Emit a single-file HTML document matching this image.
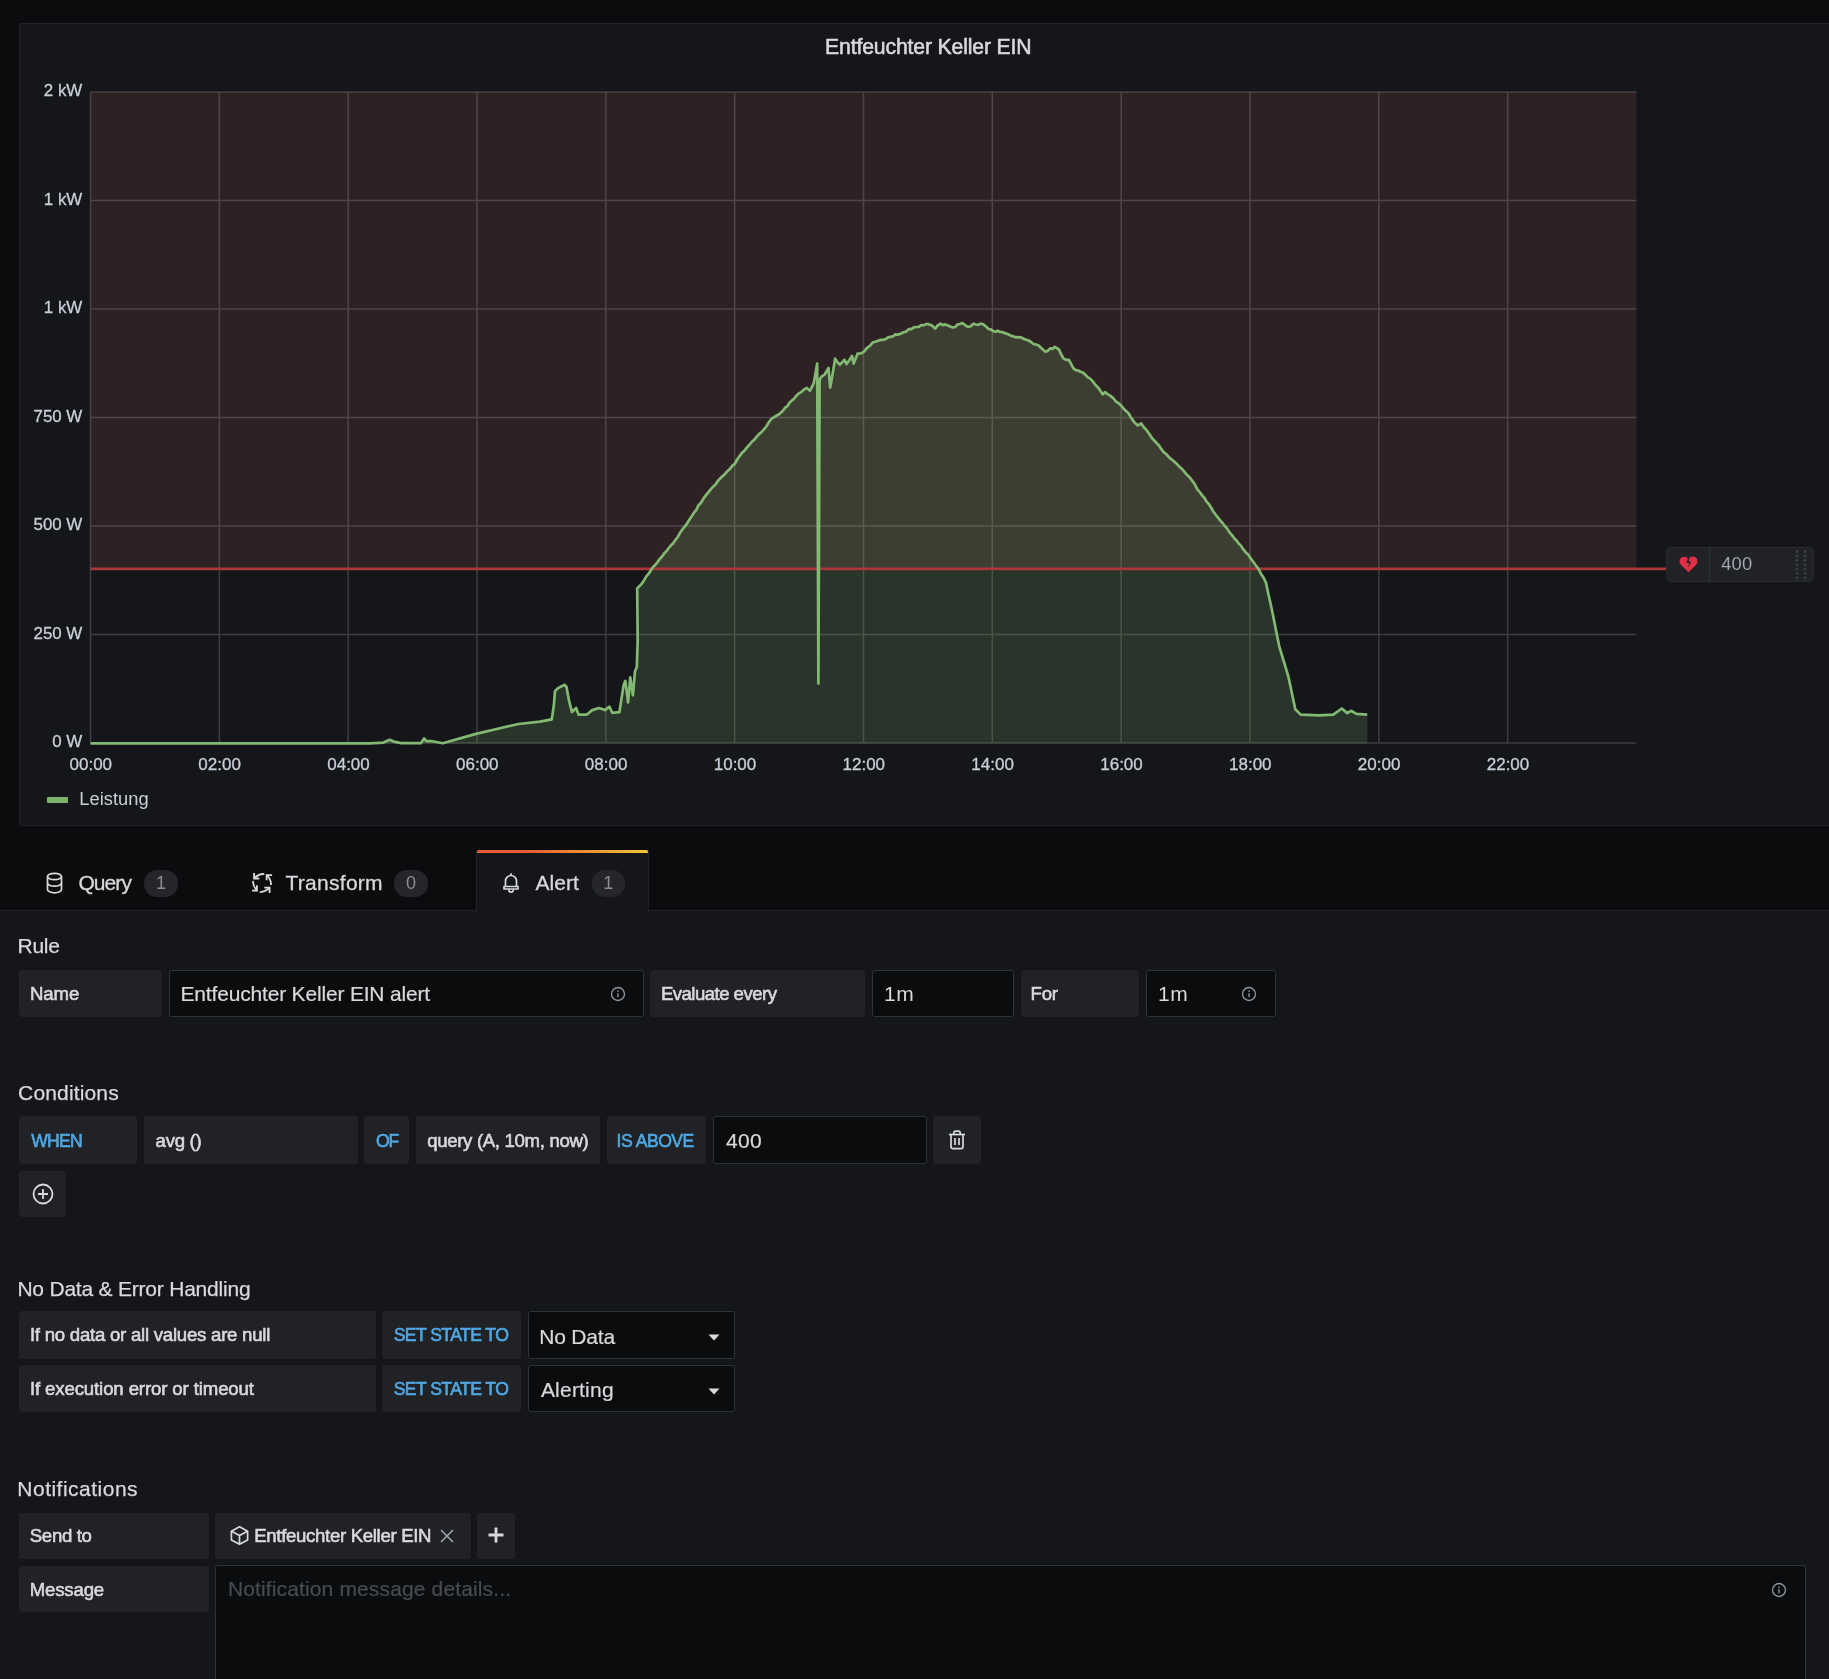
<!DOCTYPE html>
<html><head><meta charset="utf-8"><style>
html,body{margin:0;padding:0;width:1829px;height:1679px;overflow:hidden;background:#0b0c0e;font-family:"Liberation Sans", sans-serif;}
.a{position:absolute;box-sizing:border-box;}
.t{position:absolute;white-space:nowrap;line-height:1;font-family:"Liberation Sans", sans-serif;}
</style></head><body>
<div id="root" style="position:absolute;left:0;top:0;width:1829px;height:1679px;will-change:transform"><div class="a" style="left:19.0px;top:23.0px;width:1881.0px;height:803.0px;background:#141619;box-shadow:inset 0 0 0 1px #202226;border-radius:3px;"></div>
<svg class="a" style="left:0;top:0" width="1829" height="830" viewBox="0 0 1829 830"><rect x="90.5" y="92.0" width="1546.0" height="476.9" fill="rgba(234,112,112,0.12)"/><path d="M90.50 92.0V743.0 M219.33 92.0V743.0 M348.17 92.0V743.0 M477.00 92.0V743.0 M605.83 92.0V743.0 M734.67 92.0V743.0 M863.50 92.0V743.0 M992.33 92.0V743.0 M1121.17 92.0V743.0 M1250.00 92.0V743.0 M1378.83 92.0V743.0 M1507.67 92.0V743.0 M90.5 743.00H1636.5 M90.5 634.50H1636.5 M90.5 526.00H1636.5 M90.5 417.50H1636.5 M90.5 309.00H1636.5 M90.5 200.50H1636.5 M90.5 92.00H1636.5" stroke="rgba(200,200,200,0.22)" stroke-width="1.5" fill="none"/><path d="M90.5 743.3 L370.0 743.3 L383.5 742.6 L389.7 739.8 L394.9 741.9 L401.2 743.1 L420.9 743.2 L424.0 738.5 L426.6 741.2 L432.3 741.2 L442.7 743.3 L476.0 733.9 L499.9 728.2 L518.6 724.0 L540.0 721.6 L551.8 719.3 L553.9 705.0 L555.0 691.1 L558.0 688.1 L564.7 684.8 L566.5 686.9 L568.9 700.1 L571.9 711.9 L576.1 708.0 L578.5 714.6 L586.9 714.6 L591.7 710.4 L598.9 708.0 L604.9 710.1 L609.5 706.7 L612.2 712.8 L619.4 712.2 L623.6 685.1 L625.4 680.9 L628.1 702.5 L630.2 677.3 L632.9 695.3 L635.0 671.3 L636.8 667.1 L637.7 640.0 L637.2 588.4 L641.8 583.8 L644.1 580.1 L646.4 576.4 L648.7 573.7 L651.0 570.0 L653.2 566.7 L655.4 564.7 L657.7 561.8 L659.9 558.7 L662.1 556.6 L664.3 553.3 L666.5 551.1 L668.8 548.0 L671.0 545.3 L673.2 543.2 L675.5 539.8 L677.7 537.1 L680.0 532.8 L682.2 529.7 L684.5 526.9 L686.7 524.1 L689.0 520.2 L691.4 516.7 L693.8 512.9 L696.2 510.1 L698.6 505.2 L701.0 502.7 L703.4 498.6 L705.8 495.4 L708.3 492.3 L710.7 489.4 L713.1 486.7 L715.5 484.5 L718.0 480.8 L720.4 478.3 L722.8 476.0 L725.2 473.7 L727.6 470.9 L730.0 468.8 L732.4 465.7 L734.8 463.9 L737.5 459.0 L740.1 455.4 L742.4 452.4 L744.7 450.4 L747.0 447.4 L749.3 444.9 L751.7 442.0 L754.2 439.8 L756.6 436.9 L759.0 434.1 L761.4 432.2 L763.9 429.4 L766.3 426.5 L768.9 422.2 L771.5 418.7 L773.8 417.3 L776.1 415.8 L778.4 414.8 L780.7 412.8 L782.9 410.7 L785.2 407.6 L787.4 406.1 L789.7 402.5 L791.9 400.5 L794.2 398.5 L796.4 395.7 L799.0 393.3 L801.6 391.8 L804.3 389.2 L806.9 387.9 L809.9 390.9 L813.7 383.3 L817.2 363.6 L818.4 683.6 L819.6 380.0 L821.4 376.7 L824.7 374.5 L828.5 368.0 L830.2 387.6 L832.7 373.5 L835.1 358.7 L837.5 362.3 L840.0 364.7 L844.4 359.8 L846.6 364.1 L849.3 360.2 L852.0 355.9 L853.7 363.6 L857.5 353.7 L860.8 353.5 L864.0 351.6 L866.9 348.1 L869.9 345.8 L872.8 342.3 L875.3 341.7 L877.8 340.9 L880.3 339.8 L882.8 339.9 L885.3 339.3 L887.8 337.5 L890.3 336.8 L892.9 336.4 L895.4 334.4 L898.0 334.6 L900.7 333.7 L903.5 332.2 L906.2 331.6 L908.9 329.1 L911.4 329.2 L913.8 327.4 L916.3 327.0 L918.8 327.0 L921.2 325.0 L923.7 325.3 L926.1 324.1 L928.6 324.2 L931.9 325.6 L935.1 328.6 L937.9 325.2 L940.6 323.7 L943.0 325.1 L945.4 324.4 L947.8 325.4 L950.2 326.5 L952.6 327.5 L955.1 327.2 L957.5 324.4 L960.0 324.1 L962.5 323.1 L965.2 325.2 L967.9 327.0 L970.6 326.2 L973.4 323.7 L975.9 324.5 L978.3 324.8 L980.8 323.6 L983.2 324.2 L986.0 326.5 L988.7 329.1 L991.0 329.4 L993.2 331.1 L995.5 331.8 L997.7 330.7 L1000.0 332.0 L1002.6 332.2 L1005.2 333.2 L1007.9 334.1 L1010.5 335.5 L1013.1 336.4 L1015.7 337.3 L1018.3 337.2 L1021.0 337.3 L1023.6 338.9 L1026.2 339.7 L1028.6 340.5 L1031.0 342.0 L1033.5 344.0 L1035.9 344.5 L1038.3 345.2 L1040.7 347.4 L1043.0 349.8 L1045.4 351.7 L1047.7 350.9 L1050.1 348.3 L1052.4 348.9 L1054.7 346.8 L1059.0 349.5 L1061.2 354.5 L1063.4 358.3 L1066.2 359.9 L1068.9 359.9 L1073.3 368.1 L1075.7 370.1 L1078.1 370.5 L1080.5 371.8 L1082.9 372.5 L1085.3 374.7 L1087.8 377.4 L1090.2 378.6 L1092.6 381.1 L1095.1 384.5 L1097.7 387.2 L1100.2 390.4 L1102.8 394.4 L1105.0 392.2 L1107.7 394.2 L1110.5 395.9 L1113.2 398.1 L1115.9 401.5 L1118.4 403.1 L1120.8 405.3 L1123.3 408.2 L1125.8 410.8 L1128.5 413.3 L1131.2 417.9 L1134.5 422.5 L1137.8 425.5 L1141.1 423.3 L1143.8 427.3 L1146.5 429.9 L1149.3 433.9 L1152.0 438.1 L1154.3 440.5 L1156.7 443.2 L1159.0 445.5 L1161.4 449.2 L1163.7 452.1 L1166.1 454.0 L1168.4 456.7 L1171.0 459.0 L1173.5 460.9 L1176.1 463.2 L1178.6 465.9 L1181.2 468.2 L1183.7 470.9 L1186.5 474.4 L1189.3 477.0 L1192.0 480.4 L1194.7 484.1 L1197.4 489.3 L1200.1 492.5 L1202.3 495.6 L1204.6 498.2 L1206.8 501.9 L1209.0 504.2 L1211.3 508.0 L1213.5 511.8 L1215.7 514.7 L1218.0 517.6 L1220.2 520.4 L1222.5 523.0 L1224.8 526.0 L1227.2 528.6 L1229.5 532.4 L1231.8 534.9 L1234.2 538.2 L1236.5 540.5 L1238.8 543.6 L1241.1 545.9 L1243.4 549.4 L1245.8 552.4 L1248.1 554.4 L1250.6 558.4 L1253.2 561.8 L1255.7 565.3 L1258.2 568.4 L1260.8 573.4 L1263.3 577.3 L1265.9 582.3 L1268.2 593.2 L1270.6 603.8 L1272.9 614.8 L1279.1 645.8 L1288.4 676.7 L1295.3 709.2 L1300.7 714.6 L1319.3 715.4 L1333.3 714.6 L1341.8 708.5 L1347.2 713.1 L1351.0 710.8 L1356.5 713.9 L1367.3 714.6 L1367.5 743.5 L90.5 743.5 Z" fill="rgba(126,178,109,0.2)" stroke="none"/><line x1="90.5" y1="568.90" x2="1666" y2="568.90" stroke="#ab3739" stroke-width="2.8"/><path d="M90.5 743.3 L370.0 743.3 L383.5 742.6 L389.7 739.8 L394.9 741.9 L401.2 743.1 L420.9 743.2 L424.0 738.5 L426.6 741.2 L432.3 741.2 L442.7 743.3 L476.0 733.9 L499.9 728.2 L518.6 724.0 L540.0 721.6 L551.8 719.3 L553.9 705.0 L555.0 691.1 L558.0 688.1 L564.7 684.8 L566.5 686.9 L568.9 700.1 L571.9 711.9 L576.1 708.0 L578.5 714.6 L586.9 714.6 L591.7 710.4 L598.9 708.0 L604.9 710.1 L609.5 706.7 L612.2 712.8 L619.4 712.2 L623.6 685.1 L625.4 680.9 L628.1 702.5 L630.2 677.3 L632.9 695.3 L635.0 671.3 L636.8 667.1 L637.7 640.0 L637.2 588.4 L641.8 583.8 L644.1 580.1 L646.4 576.4 L648.7 573.7 L651.0 570.0 L653.2 566.7 L655.4 564.7 L657.7 561.8 L659.9 558.7 L662.1 556.6 L664.3 553.3 L666.5 551.1 L668.8 548.0 L671.0 545.3 L673.2 543.2 L675.5 539.8 L677.7 537.1 L680.0 532.8 L682.2 529.7 L684.5 526.9 L686.7 524.1 L689.0 520.2 L691.4 516.7 L693.8 512.9 L696.2 510.1 L698.6 505.2 L701.0 502.7 L703.4 498.6 L705.8 495.4 L708.3 492.3 L710.7 489.4 L713.1 486.7 L715.5 484.5 L718.0 480.8 L720.4 478.3 L722.8 476.0 L725.2 473.7 L727.6 470.9 L730.0 468.8 L732.4 465.7 L734.8 463.9 L737.5 459.0 L740.1 455.4 L742.4 452.4 L744.7 450.4 L747.0 447.4 L749.3 444.9 L751.7 442.0 L754.2 439.8 L756.6 436.9 L759.0 434.1 L761.4 432.2 L763.9 429.4 L766.3 426.5 L768.9 422.2 L771.5 418.7 L773.8 417.3 L776.1 415.8 L778.4 414.8 L780.7 412.8 L782.9 410.7 L785.2 407.6 L787.4 406.1 L789.7 402.5 L791.9 400.5 L794.2 398.5 L796.4 395.7 L799.0 393.3 L801.6 391.8 L804.3 389.2 L806.9 387.9 L809.9 390.9 L813.7 383.3 L817.2 363.6 L818.4 683.6 L819.6 380.0 L821.4 376.7 L824.7 374.5 L828.5 368.0 L830.2 387.6 L832.7 373.5 L835.1 358.7 L837.5 362.3 L840.0 364.7 L844.4 359.8 L846.6 364.1 L849.3 360.2 L852.0 355.9 L853.7 363.6 L857.5 353.7 L860.8 353.5 L864.0 351.6 L866.9 348.1 L869.9 345.8 L872.8 342.3 L875.3 341.7 L877.8 340.9 L880.3 339.8 L882.8 339.9 L885.3 339.3 L887.8 337.5 L890.3 336.8 L892.9 336.4 L895.4 334.4 L898.0 334.6 L900.7 333.7 L903.5 332.2 L906.2 331.6 L908.9 329.1 L911.4 329.2 L913.8 327.4 L916.3 327.0 L918.8 327.0 L921.2 325.0 L923.7 325.3 L926.1 324.1 L928.6 324.2 L931.9 325.6 L935.1 328.6 L937.9 325.2 L940.6 323.7 L943.0 325.1 L945.4 324.4 L947.8 325.4 L950.2 326.5 L952.6 327.5 L955.1 327.2 L957.5 324.4 L960.0 324.1 L962.5 323.1 L965.2 325.2 L967.9 327.0 L970.6 326.2 L973.4 323.7 L975.9 324.5 L978.3 324.8 L980.8 323.6 L983.2 324.2 L986.0 326.5 L988.7 329.1 L991.0 329.4 L993.2 331.1 L995.5 331.8 L997.7 330.7 L1000.0 332.0 L1002.6 332.2 L1005.2 333.2 L1007.9 334.1 L1010.5 335.5 L1013.1 336.4 L1015.7 337.3 L1018.3 337.2 L1021.0 337.3 L1023.6 338.9 L1026.2 339.7 L1028.6 340.5 L1031.0 342.0 L1033.5 344.0 L1035.9 344.5 L1038.3 345.2 L1040.7 347.4 L1043.0 349.8 L1045.4 351.7 L1047.7 350.9 L1050.1 348.3 L1052.4 348.9 L1054.7 346.8 L1059.0 349.5 L1061.2 354.5 L1063.4 358.3 L1066.2 359.9 L1068.9 359.9 L1073.3 368.1 L1075.7 370.1 L1078.1 370.5 L1080.5 371.8 L1082.9 372.5 L1085.3 374.7 L1087.8 377.4 L1090.2 378.6 L1092.6 381.1 L1095.1 384.5 L1097.7 387.2 L1100.2 390.4 L1102.8 394.4 L1105.0 392.2 L1107.7 394.2 L1110.5 395.9 L1113.2 398.1 L1115.9 401.5 L1118.4 403.1 L1120.8 405.3 L1123.3 408.2 L1125.8 410.8 L1128.5 413.3 L1131.2 417.9 L1134.5 422.5 L1137.8 425.5 L1141.1 423.3 L1143.8 427.3 L1146.5 429.9 L1149.3 433.9 L1152.0 438.1 L1154.3 440.5 L1156.7 443.2 L1159.0 445.5 L1161.4 449.2 L1163.7 452.1 L1166.1 454.0 L1168.4 456.7 L1171.0 459.0 L1173.5 460.9 L1176.1 463.2 L1178.6 465.9 L1181.2 468.2 L1183.7 470.9 L1186.5 474.4 L1189.3 477.0 L1192.0 480.4 L1194.7 484.1 L1197.4 489.3 L1200.1 492.5 L1202.3 495.6 L1204.6 498.2 L1206.8 501.9 L1209.0 504.2 L1211.3 508.0 L1213.5 511.8 L1215.7 514.7 L1218.0 517.6 L1220.2 520.4 L1222.5 523.0 L1224.8 526.0 L1227.2 528.6 L1229.5 532.4 L1231.8 534.9 L1234.2 538.2 L1236.5 540.5 L1238.8 543.6 L1241.1 545.9 L1243.4 549.4 L1245.8 552.4 L1248.1 554.4 L1250.6 558.4 L1253.2 561.8 L1255.7 565.3 L1258.2 568.4 L1260.8 573.4 L1263.3 577.3 L1265.9 582.3 L1268.2 593.2 L1270.6 603.8 L1272.9 614.8 L1279.1 645.8 L1288.4 676.7 L1295.3 709.2 L1300.7 714.6 L1319.3 715.4 L1333.3 714.6 L1341.8 708.5 L1347.2 713.1 L1351.0 710.8 L1356.5 713.9 L1367.3 714.6" fill="none" stroke="#83b972" stroke-width="2.7" stroke-linejoin="round"/></svg>
<div class="t" style="top:83.0px;font-size:16.9px;color:#c7d0d9;-webkit-text-stroke:0.3px #c7d0d9;right:1746.7px;">2 kW</div>
<div class="t" style="top:191.5px;font-size:16.9px;color:#c7d0d9;-webkit-text-stroke:0.3px #c7d0d9;right:1746.7px;">1 kW</div>
<div class="t" style="top:300.0px;font-size:16.9px;color:#c7d0d9;-webkit-text-stroke:0.3px #c7d0d9;right:1746.7px;">1 kW</div>
<div class="t" style="top:408.5px;font-size:16.9px;color:#c7d0d9;-webkit-text-stroke:0.3px #c7d0d9;right:1746.7px;">750 W</div>
<div class="t" style="top:517.0px;font-size:16.9px;color:#c7d0d9;-webkit-text-stroke:0.3px #c7d0d9;right:1746.7px;">500 W</div>
<div class="t" style="top:625.5px;font-size:16.9px;color:#c7d0d9;-webkit-text-stroke:0.3px #c7d0d9;right:1746.7px;">250 W</div>
<div class="t" style="top:734.0px;font-size:16.9px;color:#c7d0d9;-webkit-text-stroke:0.3px #c7d0d9;right:1746.7px;">0 W</div>
<div class="t" style="top:755.6px;font-size:17px;color:#c7d0d9;-webkit-text-stroke:0.3px #c7d0d9;left:-209.2px;width:600px;text-align:center;">00:00</div>
<div class="t" style="top:755.6px;font-size:17px;color:#c7d0d9;-webkit-text-stroke:0.3px #c7d0d9;left:-80.4px;width:600px;text-align:center;">02:00</div>
<div class="t" style="top:755.6px;font-size:17px;color:#c7d0d9;-webkit-text-stroke:0.3px #c7d0d9;left:48.5px;width:600px;text-align:center;">04:00</div>
<div class="t" style="top:755.6px;font-size:17px;color:#c7d0d9;-webkit-text-stroke:0.3px #c7d0d9;left:177.3px;width:600px;text-align:center;">06:00</div>
<div class="t" style="top:755.6px;font-size:17px;color:#c7d0d9;-webkit-text-stroke:0.3px #c7d0d9;left:306.1px;width:600px;text-align:center;">08:00</div>
<div class="t" style="top:755.6px;font-size:17px;color:#c7d0d9;-webkit-text-stroke:0.3px #c7d0d9;left:435.0px;width:600px;text-align:center;">10:00</div>
<div class="t" style="top:755.6px;font-size:17px;color:#c7d0d9;-webkit-text-stroke:0.3px #c7d0d9;left:563.8px;width:600px;text-align:center;">12:00</div>
<div class="t" style="top:755.6px;font-size:17px;color:#c7d0d9;-webkit-text-stroke:0.3px #c7d0d9;left:692.6px;width:600px;text-align:center;">14:00</div>
<div class="t" style="top:755.6px;font-size:17px;color:#c7d0d9;-webkit-text-stroke:0.3px #c7d0d9;left:821.5px;width:600px;text-align:center;">16:00</div>
<div class="t" style="top:755.6px;font-size:17px;color:#c7d0d9;-webkit-text-stroke:0.3px #c7d0d9;left:950.3px;width:600px;text-align:center;">18:00</div>
<div class="t" style="top:755.6px;font-size:17px;color:#c7d0d9;-webkit-text-stroke:0.3px #c7d0d9;left:1079.1px;width:600px;text-align:center;">20:00</div>
<div class="t" style="top:755.6px;font-size:17px;color:#c7d0d9;-webkit-text-stroke:0.3px #c7d0d9;left:1208.0px;width:600px;text-align:center;">22:00</div>
<div class="t" style="top:36.1px;font-size:21.2px;color:#d8d9da;-webkit-text-stroke:0.55px #d8d9da;left:825.10px;letter-spacing:-0.149px;">Entfeuchter Keller EIN</div>
<div class="a" style="left:47.0px;top:797.0px;width:21.0px;height:6.0px;background:#7eb26d;border-radius:1px;"></div>
<div class="t" style="top:789.5px;font-size:18.3px;color:#c7d0d9;left:79.20px;letter-spacing:0.056px;">Leistung</div>
<div class="a" style="left:1666.3px;top:547.0px;width:148.0px;height:35.0px;background:#202226;box-shadow:inset 0 0 0 1px #292b30;border-radius:6px;"></div>
<div class="a" style="left:1708.5px;top:547.0px;width:1.0px;height:35.0px;background:#2c3235;"></div>
<svg class="a" style="left:1679px;top:555px" width="19" height="18" viewBox="0 0 24 22"><path d="M12 21.5 L2.6 12.2 C-0.2 9.4 0.2 4.6 3.4 2.6 C6 1 9.3 1.6 11.2 3.8 L9.4 9.4 L12.6 10.2 L11.4 16 L15.2 8.2 L12.2 7.6 L13.2 3.4 C15.2 1.4 18.4 1 20.8 2.6 C23.8 4.8 24.2 9.4 21.4 12.2 Z" fill="#e02f44"/></svg>
<div class="t" style="top:555.3px;font-size:18.3px;color:#9fa7b3;left:1721.30px;letter-spacing:0.122px;">400</div>
<svg class="a" style="left:0;top:0" width="1829" height="600"><circle cx="1797" cy="551.5" r="1.3" fill="#3d4046"/><circle cx="1797" cy="555.9" r="1.3" fill="#3d4046"/><circle cx="1797" cy="560.3" r="1.3" fill="#3d4046"/><circle cx="1797" cy="564.7" r="1.3" fill="#3d4046"/><circle cx="1797" cy="569.1" r="1.3" fill="#3d4046"/><circle cx="1797" cy="573.5" r="1.3" fill="#3d4046"/><circle cx="1797" cy="577.9" r="1.3" fill="#3d4046"/><circle cx="1805" cy="551.5" r="1.3" fill="#3d4046"/><circle cx="1805" cy="555.9" r="1.3" fill="#3d4046"/><circle cx="1805" cy="560.3" r="1.3" fill="#3d4046"/><circle cx="1805" cy="564.7" r="1.3" fill="#3d4046"/><circle cx="1805" cy="569.1" r="1.3" fill="#3d4046"/><circle cx="1805" cy="573.5" r="1.3" fill="#3d4046"/><circle cx="1805" cy="577.9" r="1.3" fill="#3d4046"/></svg>
<div class="a" style="left:0.0px;top:909.5px;width:1829.0px;height:1.5px;background:#202226;"></div>
<div class="a" style="left:0.0px;top:911.0px;width:1829.0px;height:768.0px;background:#141619;"></div>
<div class="a" style="left:475.5px;top:850.0px;width:173.0px;height:61.5px;background:#141619;border:1px solid #202226;border-bottom:none;"></div>
<div class="a" style="left:476.5px;top:850px;width:171px;height:3px;background:linear-gradient(to right,#e85d33 30%,#f4c63a 99%);border-radius:2px 2px 0 0"></div>
<div class="t" style="top:871.9px;font-size:21px;color:#d8d9da;-webkit-text-stroke:0.3px #d8d9da;left:78.40px;letter-spacing:-0.922px;">Query</div>
<div class="t" style="top:871.9px;font-size:21px;color:#d8d9da;-webkit-text-stroke:0.3px #d8d9da;left:285.50px;letter-spacing:0.274px;">Transform</div>
<div class="t" style="top:872.1px;font-size:21px;color:#d8d9da;-webkit-text-stroke:0.3px #d8d9da;left:535.50px;letter-spacing:0.064px;">Alert</div>
<div class="a" style="left:144.2px;top:870.3px;width:33.5px;height:26.7px;background:#24262a;border-radius:13px;"></div>
<div class="t" style="top:874.1px;font-size:18px;color:#8e8e8e;left:-139.1px;width:600px;text-align:center;">1</div>
<div class="a" style="left:394.2px;top:870.3px;width:33.7px;height:26.7px;background:#24262a;border-radius:13px;"></div>
<div class="t" style="top:874.1px;font-size:18px;color:#8e8e8e;left:111.0px;width:600px;text-align:center;">0</div>
<div class="a" style="left:591.6px;top:870.3px;width:33.4px;height:26.7px;background:#24262a;border-radius:13px;"></div>
<div class="t" style="top:874.1px;font-size:18px;color:#8e8e8e;left:308.3px;width:600px;text-align:center;">1</div>
<svg class="a" style="left:46px;top:872px" width="17" height="22" viewBox="0 0 17 22" fill="none" stroke="#d8d9da" stroke-width="1.7">
<ellipse cx="8.5" cy="4.5" rx="7" ry="3.2"/><path d="M1.5 4.5V17.5C1.5 19.3 4.6 20.8 8.5 20.8S15.5 19.3 15.5 17.5V4.5"/><path d="M1.5 11C1.5 12.8 4.6 14.2 8.5 14.2S15.5 12.8 15.5 11"/></svg>
<svg class="a" style="left:252px;top:873px" width="21" height="21" viewBox="0 0 21 21" fill="none" stroke="#d8d9da" stroke-width="1.8" stroke-linecap="square">
<path d="M2.1 0.8V5.5H6.4"/><path d="M2.6 5C5 2.3 7.5 1.1 11.4 1"/><path d="M19.2 2.1H14.6V6.4"/><path d="M15.1 2.6C17.6 5 18.9 7.5 19 11.2"/><path d="M0.8 17.7H4.9V13.2"/><path d="M4.4 17.2C2.2 14.5 1.1 12 1 8.8"/><path d="M13.2 14.7H17.6V19.2"/><path d="M17.1 15.2C14.6 17.6 12 19 8.6 19.1"/></svg>
<svg class="a" style="left:502px;top:872px" width="18" height="22" viewBox="0 0 18 22" fill="none" stroke="#d8d9da" stroke-width="1.7">
<path d="M9 1.2V3.5"/><path d="M3.5 14V9C3.5 5.8 6 3.5 9 3.5S14.5 5.8 14.5 9V14"/><path d="M2 14.5H16V17H2Z" stroke-linejoin="round"/><path d="M6.8 17.5C6.8 19 7.8 20.2 9 20.2S11.2 19 11.2 17.5"/></svg>
<div class="t" style="top:935.0px;font-size:21px;color:#d8d9da;-webkit-text-stroke:0.25px #d8d9da;left:17.50px;letter-spacing:-0.270px;">Rule</div>
<div class="a" style="left:19.0px;top:969.5px;width:142.5px;height:47.0px;background:#202226;border-radius:3px;"></div>
<div class="t" style="top:984.9px;font-size:18.6px;color:#d8d9da;-webkit-text-stroke:0.6px #d8d9da;left:30.10px;letter-spacing:-0.157px;">Name</div>
<div class="a" style="left:168.5px;top:969.5px;width:475.0px;height:47.0px;background:#0b0c0e;box-shadow:inset 0 0 0 1px #2c3235;border-radius:3px;"></div>
<div class="t" style="top:982.9px;font-size:21px;color:#d8d9da;-webkit-text-stroke:0.2px #d8d9da;left:180.50px;letter-spacing:-0.178px;">Entfeuchter Keller EIN alert</div>
<svg class="a" style="left:609px;top:984.5px" width="18" height="18" viewBox="0 0 18 18"><circle cx="9" cy="9" r="6.5" fill="none" stroke="#8f949b" stroke-width="1.35"/><rect x="8.3" y="8.2" width="1.4" height="3.9" fill="#8f949b"/><rect x="8.3" y="5.6" width="1.4" height="1.4" fill="#8f949b"/></svg>
<div class="a" style="left:649.5px;top:969.5px;width:215.5px;height:47.0px;background:#202226;border-radius:3px;"></div>
<div class="t" style="top:985.1px;font-size:18.6px;color:#d8d9da;-webkit-text-stroke:0.6px #d8d9da;left:660.90px;letter-spacing:-0.533px;">Evaluate every</div>
<div class="a" style="left:871.5px;top:969.5px;width:142.0px;height:47.0px;background:#0b0c0e;box-shadow:inset 0 0 0 1px #2c3235;border-radius:3px;"></div>
<div class="t" style="top:982.9px;font-size:21px;color:#d8d9da;letter-spacing:0.8px;left:883.9px;">1m</div>
<div class="a" style="left:1020.5px;top:969.5px;width:118.0px;height:47.0px;background:#202226;border-radius:3px;"></div>
<div class="t" style="top:985.1px;font-size:18.6px;color:#d8d9da;-webkit-text-stroke:0.6px #d8d9da;left:1030.50px;letter-spacing:-0.203px;">For</div>
<div class="a" style="left:1145.5px;top:969.5px;width:130.0px;height:47.0px;background:#0b0c0e;box-shadow:inset 0 0 0 1px #2c3235;border-radius:3px;"></div>
<div class="t" style="top:982.9px;font-size:21px;color:#d8d9da;letter-spacing:0.8px;left:1157.9px;">1m</div>
<svg class="a" style="left:1240px;top:984.5px" width="18" height="18" viewBox="0 0 18 18"><circle cx="9" cy="9" r="6.5" fill="none" stroke="#8f949b" stroke-width="1.35"/><rect x="8.3" y="8.2" width="1.4" height="3.9" fill="#8f949b"/><rect x="8.3" y="5.6" width="1.4" height="1.4" fill="#8f949b"/></svg>
<div class="t" style="top:1082.2px;font-size:21px;color:#d8d9da;-webkit-text-stroke:0.25px #d8d9da;left:18.10px;letter-spacing:0.153px;">Conditions</div>
<div class="a" style="left:19.0px;top:1116.0px;width:118.0px;height:47.5px;background:#202226;border-radius:3px;"></div>
<div class="t" style="top:1132.9px;font-size:17.6px;color:#4fa8e4;-webkit-text-stroke:0.6px #4fa8e4;left:31.30px;letter-spacing:-0.787px;">WHEN</div>
<div class="a" style="left:144.3px;top:1116.0px;width:213.7px;height:47.5px;background:#202226;border-radius:3px;"></div>
<div class="t" style="top:1132.0px;font-size:18.6px;color:#d8d9da;-webkit-text-stroke:0.6px #d8d9da;left:155.60px;letter-spacing:-0.290px;">avg ()</div>
<div class="a" style="left:364.4px;top:1116.0px;width:45.1px;height:47.5px;background:#202226;border-radius:3px;"></div>
<div class="t" style="top:1132.9px;font-size:17.6px;color:#4fa8e4;-webkit-text-stroke:0.6px #4fa8e4;left:375.90px;letter-spacing:-1.090px;">OF</div>
<div class="a" style="left:416.2px;top:1116.0px;width:183.8px;height:47.5px;background:#202226;border-radius:3px;"></div>
<div class="t" style="top:1132.1px;font-size:18.6px;color:#d8d9da;-webkit-text-stroke:0.6px #d8d9da;left:427.20px;letter-spacing:-0.326px;">query (A, 10m, now)</div>
<div class="a" style="left:606.7px;top:1116.0px;width:99.3px;height:47.5px;background:#202226;border-radius:3px;"></div>
<div class="t" style="top:1132.9px;font-size:17.6px;color:#4fa8e4;-webkit-text-stroke:0.6px #4fa8e4;left:616.60px;letter-spacing:-0.489px;">IS ABOVE</div>
<div class="a" style="left:713.3px;top:1116.0px;width:213.3px;height:47.5px;background:#0b0c0e;box-shadow:inset 0 0 0 1px #2c3235;border-radius:3px;"></div>
<div class="t" style="top:1130.0px;font-size:21px;color:#d8d9da;-webkit-text-stroke:0.2px #d8d9da;left:726.00px;letter-spacing:0.371px;">400</div>
<div class="a" style="left:933.1px;top:1116.0px;width:47.6px;height:47.5px;background:#202226;border-radius:3px;"></div>
<svg class="a" style="left:946px;top:1129px" width="22" height="22" viewBox="0 0 22 22" fill="none" stroke="#d8d9da" stroke-width="1.7">
<path d="M3 5.5H19"/><path d="M7.8 5.5V4C7.8 2.8 8.6 2.2 9.6 2.2H12.4C13.4 2.2 14.2 2.8 14.2 4V5.5"/><path d="M5 5.5V17.5C5 18.8 5.8 19.6 7 19.6H15C16.2 19.6 17 18.8 17 17.5V5.5"/><path d="M9 9V16M13 9V16"/></svg>
<div class="a" style="left:19.0px;top:1170.6px;width:46.6px;height:46.4px;background:#202226;border-radius:3px;"></div>
<svg class="a" style="left:31px;top:1181.7px" width="24" height="24" viewBox="0 0 24 24" fill="none" stroke="#d8d9da" stroke-width="1.8">
<circle cx="12" cy="12" r="9.5"/><path d="M12 7V17M7 12H17"/></svg>
<div class="t" style="top:1278.4px;font-size:21px;color:#d8d9da;-webkit-text-stroke:0.25px #d8d9da;left:17.40px;letter-spacing:-0.214px;">No Data &amp; Error Handling</div>
<div class="a" style="left:19.0px;top:1311.0px;width:357.0px;height:47.5px;background:#202226;border-radius:3px;"></div>
<div class="t" style="top:1326.0px;font-size:18.6px;color:#d8d9da;-webkit-text-stroke:0.6px #d8d9da;left:29.90px;letter-spacing:-0.238px;">If no data or all values are null</div>
<div class="a" style="left:382.3px;top:1311.0px;width:138.4px;height:47.5px;background:#202226;border-radius:3px;"></div>
<div class="t" style="top:1326.8px;font-size:17.6px;color:#4fa8e4;-webkit-text-stroke:0.6px #4fa8e4;left:393.70px;letter-spacing:-0.577px;">SET STATE TO</div>
<div class="a" style="left:527.7px;top:1311.0px;width:207.8px;height:47.5px;background:#0b0c0e;box-shadow:inset 0 0 0 1px #2c3235;border-radius:3px;"></div>
<div class="t" style="top:1325.8px;font-size:21px;color:#d8d9da;-webkit-text-stroke:0.2px #d8d9da;left:539.20px;letter-spacing:-0.176px;">No Data</div>
<svg class="a" style="left:708px;top:1333.5px" width="12" height="7" viewBox="0 0 12 7"><path d="M0.5 0.5H11.5L6 6.5Z" fill="#d8d9da"/></svg>
<div class="a" style="left:19.0px;top:1365.0px;width:357.0px;height:46.7px;background:#202226;border-radius:3px;"></div>
<div class="t" style="top:1379.7px;font-size:18.6px;color:#d8d9da;-webkit-text-stroke:0.6px #d8d9da;left:29.90px;letter-spacing:-0.117px;">If execution error or timeout</div>
<div class="a" style="left:382.3px;top:1365.0px;width:138.4px;height:46.7px;background:#202226;border-radius:3px;"></div>
<div class="t" style="top:1380.5px;font-size:17.6px;color:#4fa8e4;-webkit-text-stroke:0.6px #4fa8e4;left:393.70px;letter-spacing:-0.577px;">SET STATE TO</div>
<div class="a" style="left:527.7px;top:1365.0px;width:207.8px;height:46.7px;background:#0b0c0e;box-shadow:inset 0 0 0 1px #2c3235;border-radius:3px;"></div>
<div class="t" style="top:1379.1px;font-size:21px;color:#d8d9da;-webkit-text-stroke:0.2px #d8d9da;left:540.90px;letter-spacing:0.211px;">Alerting</div>
<svg class="a" style="left:708px;top:1387.5px" width="12" height="7" viewBox="0 0 12 7"><path d="M0.5 0.5H11.5L6 6.5Z" fill="#d8d9da"/></svg>
<div class="t" style="top:1478.3px;font-size:21px;color:#d8d9da;-webkit-text-stroke:0.25px #d8d9da;left:17.30px;letter-spacing:0.493px;">Notifications</div>
<div class="a" style="left:19.0px;top:1512.7px;width:190.0px;height:45.9px;background:#202226;border-radius:3px;"></div>
<div class="t" style="top:1527.4px;font-size:18.6px;color:#d8d9da;-webkit-text-stroke:0.6px #d8d9da;left:29.80px;letter-spacing:-0.329px;">Send to</div>
<div class="a" style="left:215.2px;top:1512.7px;width:255.4px;height:45.9px;background:#202226;border-radius:3px;"></div>
<svg class="a" style="left:228.5px;top:1525px" width="21" height="21" viewBox="0 0 21 21" fill="none" stroke="#d8d9da" stroke-width="1.7" stroke-linejoin="round">
<path d="M10.5 1.8L18.6 6.2V15L10.5 19.3L2.4 15V6.2Z"/><path d="M2.6 6.3L10.5 10.6L18.4 6.3M10.5 10.6V19"/></svg>
<div class="t" style="top:1527.4px;font-size:18.6px;color:#d8d9da;-webkit-text-stroke:0.6px #d8d9da;left:254.20px;letter-spacing:-0.314px;">Entfeuchter Keller EIN</div>
<svg class="a" style="left:439px;top:1527.5px" width="16" height="16" viewBox="0 0 16 16" stroke="#9fa7b3" stroke-width="1.5"><path d="M2 2L14 14M14 2L2 14"/></svg>
<div class="a" style="left:477.0px;top:1512.7px;width:38.0px;height:45.9px;background:#202226;border-radius:3px;"></div>
<svg class="a" style="left:487px;top:1526px" width="18" height="18" viewBox="0 0 18 18" stroke="#d8d9da" stroke-width="2.8"><path d="M9 1.5V16.5M1.5 9H16.5"/></svg>
<div class="a" style="left:19.0px;top:1565.6px;width:190.0px;height:46.6px;background:#202226;border-radius:3px;"></div>
<div class="t" style="top:1581.4px;font-size:18.6px;color:#d8d9da;-webkit-text-stroke:0.6px #d8d9da;left:29.70px;letter-spacing:-0.155px;">Message</div>
<div class="a" style="left:215.2px;top:1565.0px;width:1590.6px;height:135.0px;background:#0b0c0e;box-shadow:inset 0 0 0 1px #2c3235;border-radius:3px;"></div>
<div class="t" style="top:1578.2px;font-size:21px;color:#464c54;-webkit-text-stroke:0.2px #464c54;left:227.90px;letter-spacing:0.139px;">Notification message details...</div>
<svg class="a" style="left:1770px;top:1581px" width="18" height="18" viewBox="0 0 18 18"><circle cx="9" cy="9" r="6.5" fill="none" stroke="#8f949b" stroke-width="1.35"/><rect x="8.3" y="8.2" width="1.4" height="3.9" fill="#8f949b"/><rect x="8.3" y="5.6" width="1.4" height="1.4" fill="#8f949b"/></svg></div>
</body></html>
